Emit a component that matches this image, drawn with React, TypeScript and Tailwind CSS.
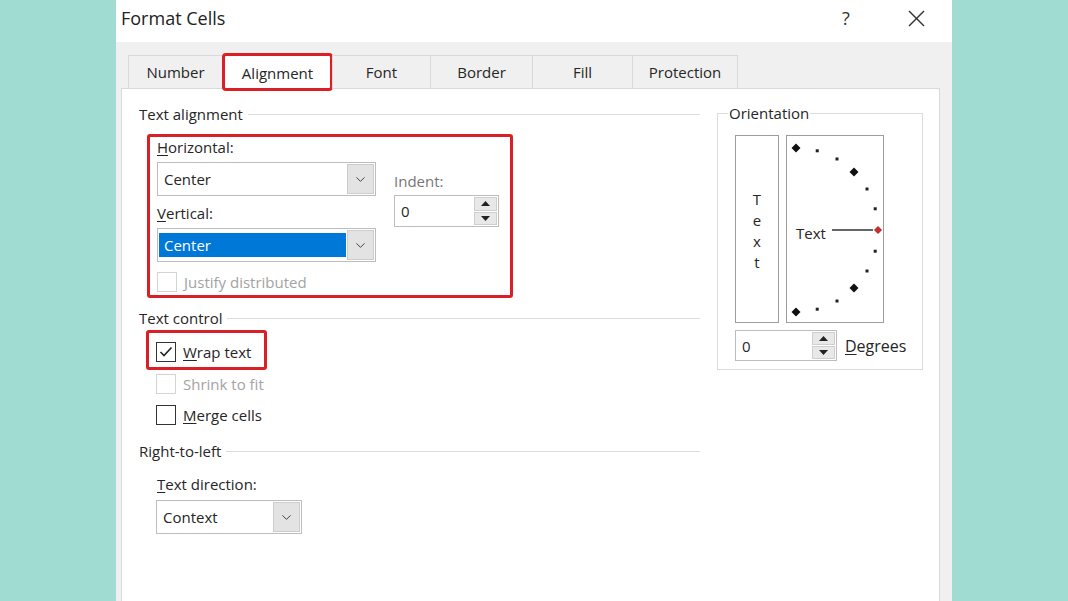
import { ChevronDown } from 'lucide-react';

const tabs = [
  { label: 'Number', w: 'w-[94px]' },
  { label: 'Alignment', w: 'w-[110px]', active: true },
  { label: 'Font', w: 'w-[98px]' },
  { label: 'Border', w: 'w-[102px]' },
  { label: 'Fill', w: 'w-[100px]' },
  { label: 'Protection', w: 'w-[106px]' },
];

function GroupHeader({ label, className = '' }: { label: string; className?: string }) {
  return (
    <div className={`flex items-center h-[20px] ${className}`}>
      <span>{label}</span>
      <div className="ml-[5px] h-px flex-1 bg-[#dcdcdc]" />
    </div>
  );
}

function Select({ value, className = '', selected = false }: { value: string; className?: string; selected?: boolean }) {
  return (
    <div className={`flex h-[34px] border border-[#bdbdbd] bg-white ${className}`}>
      <div className="flex-1 flex items-stretch py-[4px] pl-px">
        <div
          className={`flex-1 flex items-center pl-[5px] ${selected ? 'bg-[#0078d7] text-white' : ''}`}
        >
          {value}
        </div>
      </div>
      <div className="w-[27px] m-px flex items-center justify-center bg-[#e3e3e3] border border-[#cccccc]">
        <ChevronDown className="w-[15px] h-[15px] text-[#444]" strokeWidth={1.6} />
      </div>
    </div>
  );
}

function Spinner({ className = '' }: { className?: string }) {
  return (
    <div className={`flex border border-[#bdbdbd] bg-white ${className}`}>
      <div className="flex-1 flex items-center pl-[6px]">0</div>
      <div className="w-[23px] flex flex-col m-px gap-px">
        <div className="flex-1 flex items-center justify-center bg-[#e8e8e8] border border-[#cfcfcf]">
          <svg width="9" height="5" viewBox="0 0 9 5">
            <polygon points="4.5,0 9,5 0,5" fill="#222" />
          </svg>
        </div>
        <div className="flex-1 flex items-center justify-center bg-[#e8e8e8] border border-[#cfcfcf]">
          <svg width="9" height="5" viewBox="0 0 9 5">
            <polygon points="0,0 9,0 4.5,5" fill="#222" />
          </svg>
        </div>
      </div>
    </div>
  );
}

function Checkbox({ checked = false, disabled = false }: { checked?: boolean; disabled?: boolean }) {
  return (
    <div
      className={`w-[20px] h-[20px] shrink-0 border bg-white flex items-center justify-center ${
        disabled ? 'border-[#d4d4d4]' : 'border-[#333]'
      }`}
    >
      {checked && (
        <svg width="14" height="12" viewBox="0 0 14 12">
          <polyline points="1.5,6 5,9.5 12.5,1.5" fill="none" stroke="#222" strokeWidth="1.6" />
        </svg>
      )}
    </div>
  );
}

function Dial() {
  const cx = 10;
  const cy = 95;
  const r = 82;
  const angles = [90, 75, 60, 45, 30, 15, -15, -30, -45, -60, -75, -90];
  return (
    <div className="relative w-[98px] h-[188px] border border-[#9d9d9d] bg-white">
      <svg className="absolute inset-0" width="96" height="186" viewBox="1 1 96 186">
        {angles.map((a) => {
          const x = cx + r * Math.cos((a * Math.PI) / 180);
          const y = cy - r * Math.sin((a * Math.PI) / 180);
          const big = a % 45 === 0;
          if (big) {
            return (
              <polygon
                key={a}
                points={`${x},${y - 4.5} ${x + 4.5},${y} ${x},${y + 4.5} ${x - 4.5},${y}`}
                fill="#111"
              />
            );
          }
          return <rect key={a} x={x - 1.5} y={y - 1.5} width="3" height="3" fill="#222" />;
        })}
        <line x1="46" y1="95" x2="87" y2="95" stroke="#333" strokeWidth="1.3" />
        <polygon points="92,91.5 95.5,95 92,98.5 88.5,95" fill="#d42a2a" stroke="#8a1414" strokeWidth="0.8" />
      </svg>
      <span className="absolute left-[9px] top-[87px] leading-[20px]">Text</span>
    </div>
  );
}

export default function App() {
  return (
    <div className="w-[1068px] h-[601px] overflow-hidden bg-[#a0dcd2] flex font-['Open_Sans','Noto_Sans',sans-serif] text-[15px] leading-[20px] text-[#262626]">
      <div className="ml-[116px] w-[836px] h-[601px] flex flex-col bg-[#f0f0f0]">
        {/* Title bar */}
        <div className="h-[42px] shrink-0 bg-white flex items-start pt-[8px] pl-[5px]">
          <span className="text-[18px] leading-[20px] text-[#222]">Format Cells</span>
          <span className="ml-auto w-[16px] text-center text-[18px] leading-[20px] text-[#333]">?</span>
          <svg className="ml-[54px] mr-[27px] mt-[2px]" width="17" height="17" viewBox="0 0 17 17">
            <line x1="1" y1="1" x2="16" y2="16" stroke="#333" strokeWidth="1.4" />
            <line x1="16" y1="1" x2="1" y2="16" stroke="#333" strokeWidth="1.4" />
          </svg>
        </div>

        {/* Tabs */}
        <div className="relative z-10 -mb-px mt-[13px] pl-[12px] flex h-[34px] shrink-0">
          {tabs.map((t, i) => (
            <div
              key={t.label}
              className={`relative ${t.w} flex items-center justify-center border-t border-l border-[#d9d9d9] ${
                i === tabs.length - 1 ? 'border-r' : ''
              } ${t.active ? 'bg-white' : 'border-b bg-[#f0f0f0]'}`}
            >
              {t.label}
              {t.active && (
                <div className="absolute -top-[3px] -left-px -right-px -bottom-[2px] rounded-[4px] border-[3px] border-[#da1f27]" />
              )}
            </div>
          ))}
        </div>

        {/* Panel */}
        <div className="ml-[5px] w-[819px] flex-1 bg-white border-t border-x border-[#d9d9d9] flex items-start pl-[17px]">
          {/* Left column */}
          <div className="w-[561px] pt-[15px] flex flex-col">
            <GroupHeader label="Text alignment" />
            <div className="ml-[8px] mt-[10px] w-[366px] h-[164px] rounded-[3px] border-[3px] border-[#da1f27] pl-[7px] flex">
              <div className="w-[219px] flex flex-col">
                <div>
                  <u className="underline-offset-2">H</u>orizontal:
                </div>
                <Select value="Center" className="mt-[5px] w-[219px]" />
                <div className="mt-[7px]">
                  <u className="underline-offset-2">V</u>ertical:
                </div>
                <Select value="Center" selected className="mt-[5px] w-[219px]" />
                <div className="mt-[10px] flex items-center gap-[7px] text-[#a3a3a3]">
                  <Checkbox disabled />
                  <span>Justify distributed</span>
                </div>
              </div>
              <div className="ml-[18px] pt-[34px] flex flex-col">
                <div className="text-[#767676]">Indent:</div>
                <Spinner className="mt-[4px] w-[105px] h-[32px]" />
              </div>
            </div>

            <GroupHeader label="Text control" className="mt-[10px]" />
            <div className="ml-[7px] mt-[2px] w-[121px] h-[40px] rounded-[3px] border-[3px] border-[#da1f27] pl-[7px] pt-[3px] flex items-center gap-[7px]">
              <Checkbox checked />
              <span>
                <u className="underline-offset-2">W</u>rap text
              </span>
            </div>
            <div className="ml-[17px] mt-[4px] flex items-center gap-[7px] text-[#a3a3a3]">
              <Checkbox disabled />
              <span>Shrink to fit</span>
            </div>
            <div className="ml-[17px] mt-[11px] flex items-center gap-[7px]">
              <Checkbox />
              <span>
                <u className="underline-offset-2">M</u>erge cells
              </span>
            </div>

            <GroupHeader label="Right-to-left" className="mt-[16px]" />
            <div className="ml-[18px] mt-[13px]">
              <u className="underline-offset-2">T</u>ext direction:
            </div>
            <Select value="Context" className="ml-[17px] mt-[6px] w-[146px] h-[33px]" />
          </div>

          {/* Orientation */}
          <div className="ml-[17px] pt-[24px]">
            <div className="relative w-[206px] h-[257px] border border-[#dcdcdc] pl-[17px] pt-[21px]">
              <span className="absolute -top-[11px] left-[10px] bg-white px-px">Orientation</span>
              <div className="flex gap-[7px]">
                <div className="w-[44px] h-[188px] border border-[#9d9d9d] flex flex-col items-center justify-center leading-[21px] pt-[4px]">
                  <span>T</span>
                  <span>e</span>
                  <span>x</span>
                  <span>t</span>
                </div>
                <Dial />
              </div>
              <div className="mt-[7px] flex items-center">
                <Spinner className="w-[102px] h-[31px]" />
                <span className="ml-[8px] text-[16px]">
                  <u className="underline-offset-2">D</u>egrees
                </span>
              </div>
            </div>
          </div>
        </div>
      </div>
    </div>
  );
}
